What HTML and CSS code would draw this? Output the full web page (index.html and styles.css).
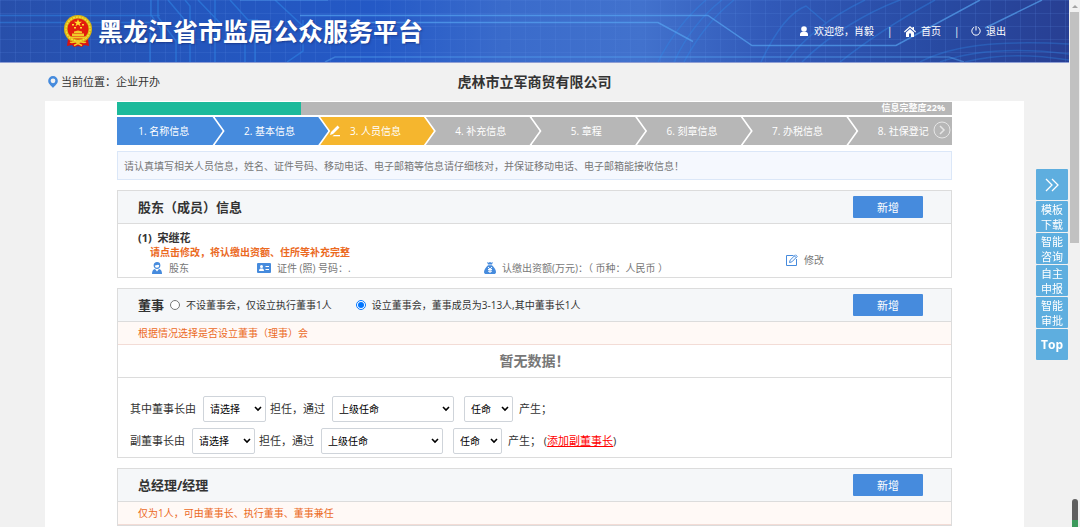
FILE: index.html
```html
<!DOCTYPE html>
<html lang="zh-CN">
<head>
    <meta charset="UTF-8">
    <meta name="viewport" content="width=device-width, initial-scale=1.0">
    <title>黑龙江省市监局公众服务平台</title>
    <link rel="stylesheet" href="styles.css">
</head>
<body>

    <header class="header">
        <svg class="header-lines" viewBox="0 0 1069 62" preserveAspectRatio="xMinYMin slice" fill="none" aria-hidden="true">
            <defs>
                <pattern id="grid" width="15" height="13" patternUnits="userSpaceOnUse">
                    <path d="M0 .5h15M.5 0v13" stroke="#5b8fe8" stroke-opacity=".16"/>
                </pattern>
            </defs>
            <path fill="url(#grid)" d="M0 0h1069v62H0z"/>
            <g stroke="#2f86e6" stroke-opacity=".55" stroke-width="1.5">
                <path d="M151 0v15l10 14v12M158 0v17l18 24v21M185 0l5 6v56M168 0l21 25M230 0l18 20h10M150 33v29M215 0v62M245 40v22M255 40v22M198 0l23 24"/>
                <path d="M275 0l28 26v25l-16 11M303 20v28"/>
                <path d="M0 15.500h160M0 22.500h150" stroke-opacity=".5"/>
                <path d="M658 62C674 30 692 12 706 0M674 62C688 32 704 14 722 0M684 62C698 36 712 18 734 0M761 62C775 32 790 12 806 6l20 17M786 62C810 30 840 12 865 0M802 62C830 34 868 12 900 0M840 62C865 42 895 22 935 0" stroke-opacity=".4"/>
                <path d="M920 62c30-16 75-22 149-18M940 62c34-12 80-14 129-8M965 62c30-8 66-8 104-2" stroke-opacity=".35"/>
            </g>
            <g stroke="#57a7f2" stroke-width="1.5">
                <path d="M325 62l10-5h614l15 5M240 0h88" stroke-opacity=".45"/>
                <path d="M300 15.500h408l44 30h144L980 0M340 22.500h318l35 19M985 28l57-28" stroke-opacity=".65"/>
            </g>
        </svg>
        <div class="brand">
            <svg class="emblem" viewBox="0 0 28 32" aria-hidden="true">
                <path fill="#d8130f" d="M4 24h20l1 7-5-1-2 2-4-1-4 1-2-2-5 1z"/>
                <circle cx="14" cy="14" r="14" fill="#d9b512"/>
                <circle cx="14" cy="14" r="12" fill="none" stroke="#f6dd3a" stroke-width="1.500" stroke-dasharray="2 1"/>
                <circle cx="14" cy="14" r="10.500" fill="#e21c0e"/>
                <path fill="#ffdf2e" d="M14 4l1 2.700h3l-2.400 1.700.9 2.800L14 9.500l-2.500 1.700.9-2.800L10 6.700h3zM8 9h2v1.500H8zM18 9h2v1.500h-2zM10 12h2v1.500h-2zM16 12h2v1.500h-2z"/>
                <path fill="#f1c929" d="M10 16.500l4-1 4 1v1.500h-8zM8 18.500h12V21H8zM5.500 21.500h17l-2 2h-13z"/>
                <path fill="none" stroke="#f1c929" stroke-width="1.500" d="M6 27c3 2 5-1 8-1s5 3 8 1M10 30.500l4-2 4 2"/>
                <circle cx="14" cy="27" r="2" fill="#f1c929"/>
            </svg>
            <h1>黑龙江省市监局公众服务平台</h1>
        </div>
        <nav class="user-nav">
            <span class="nav-item">
                <svg class="nav-icon" viewBox="0 0 10 10" fill="#fff" aria-hidden="true"><circle cx="5" cy="3" r="2.800"/><path d="M1 10c-.5-3 1-4 3-4.200h2C8 6 9.500 7 9 10z"/></svg>
                欢迎您，肖毅
            </span>
            <span class="divider">|</span>
            <a class="nav-item" href="#">
                <svg class="nav-icon home" viewBox="0 0 12 11" fill="#fff" aria-hidden="true"><path d="M6 0l2.500 2.300V1H10v2.700l2 1.900-.7.800L6 1.700.7 6.400 0 5.600z"/><path d="M6 3l4 3.500V11H7V7.500H5V11H2V6.500z"/></svg>
                首页
            </a>
            <span class="divider">|</span>
            <a class="nav-item" href="#">
                <svg class="nav-icon" viewBox="0 0 10 10" fill="none" stroke="#fff" aria-hidden="true"><path d="M3.200 1.200a4.200 4.200 0 1 0 3.600 0M5 0v4.500"/></svg>
                退出
            </a>
        </nav>
    </header>

    <div class="location-bar">
        <div class="location">
            <svg class="pin" viewBox="0 0 10 12" aria-hidden="true"><path fill="#468bdd" fill-rule="evenodd" d="M5 0a4.800 4.800 0 0 0-4.800 4.800C.2 8 3 9.500 5 12c2-2.500 4.800-4 4.800-7.200A4.800 4.800 0 0 0 5 0zm0 2.400a2.400 2.400 0 1 1 0 4.800 2.400 2.400 0 0 1 0-4.800z"/></svg>
            当前位置：企业开办
        </div>
        <h2 class="company">虎林市立军商贸有限公司</h2>
    </div>

    <main class="content">
        <div class="progress">
            <div class="progress-fill" style="width: 22%"></div>
            <span class="progress-text">信息完整度22%</span>
        </div>

        <div class="steps">
            <ol class="step-list">
                <li class="step done">1. 名称信息</li>
                <li class="step done">2. 基本信息</li>
                <li class="step current">
                    <svg class="step-icon" viewBox="0 0 12 12" fill="#fff" aria-hidden="true"><path d="M8.500.5l2 2L4 9l-3 1 1-3zM5 10h6v1.300H3.500z"/></svg>
                    3. 人员信息
                </li>
                <li class="step">4. 补充信息</li>
                <li class="step">5. 章程</li>
                <li class="step">6. 刻章信息</li>
                <li class="step">7. 办税信息</li>
                <li class="step">8. 社保登记</li>
            </ol>
            <button class="step-next" type="button" aria-label="下一步">
                <svg viewBox="0 0 18 18" fill="none" stroke="#e6e6e6" aria-hidden="true"><circle cx="9" cy="9" r="8"/><path stroke-width="1.500" d="M7 5l4 4-4 4"/></svg>
            </button>
        </div>

        <p class="tip">请认真填写相关人员信息，姓名、证件号码、移动电话、电子邮箱等信息请仔细核对，并保证移动电话、电子邮箱能接收信息！</p>

        <section class="card">
            <div class="card-header">
                <h3>股东（成员）信息</h3>
                <button class="btn-add" type="button">新增</button>
            </div>
            <div class="member">
                <div class="member-info">
                    <h4>(1)&nbsp; 宋继花</h4>
                    <p class="member-warning">请点击修改，将认缴出资额、住所等补充完整</p>
                    <div class="member-details">
                        <span class="detail">
                            <svg viewBox="0 0 12 12" aria-hidden="true"><circle cx="6" cy="3.500" r="2.800" fill="none" stroke="#468bdd" stroke-width="1.200"/><path fill="#468bdd" d="M3 2.500C4 0 8 0 9 2.500v1L7 2.700 3 3.800zM1 12c0-3 1-4.500 3-5l2 2.500L8 7c2 .5 3 2 3 5z"/></svg>
                            股东
                        </span>
                        <span class="detail">
                            <svg class="id-card" viewBox="0 0 14 10" aria-hidden="true"><rect width="14" height="10" rx="1" fill="#468bdd"/><circle cx="4.500" cy="3.500" r="1.500" fill="#fff"/><path fill="#fff" d="M2 8c0-2 1-2.500 2.500-2.500S7 6 7 8zM8.500 3H12v1H8.500zM8.500 6H12v1H8.500z"/></svg>
                            证件 (照) 号码：.
                        </span>
                        <span class="detail">
                            <svg viewBox="0 0 12 12" aria-hidden="true"><path fill="#468bdd" d="M3 0l1.500.7L6 0l1.500.7L9 0 8 2.500H4zM4 3.200h4C10 5 12 7.500 12 10c0 1.500-1 2-2 2H2c-1 0-2-.5-2-2 0-2.500 2-5 4-6.800z"/><path stroke="#fff" fill="none" d="M4 5l2 2.200L8 5M4 7.500h4M4 9.200h4M6 7v4"/></svg>
                            认缴出资额(万元)：（ 币种：人民币 ）
                        </span>
                    </div>
                </div>
                <a class="edit-link" href="#">
                    <svg viewBox="0 0 12 12" fill="none" stroke="#468bdd" aria-hidden="true"><path d="M7.500 1.500h-7v10h10V5M3.500 8.500l.6-2.300L9.500.8l1.700 1.700-5.400 5.400zM8.500 2l1.500 1.500"/></svg>
                    修改
                </a>
            </div>
        </section>

        <section class="card">
            <div class="card-header">
                <h3>董事</h3>
                <div class="radio-group">
                    <input type="radio" name="board" id="board-none">
                    <label for="board-none">不设董事会，仅设立执行董事1人</label>
                    <input type="radio" name="board" id="board-set" checked>
                    <label for="board-set">设立董事会，董事成员为3-13人,其中董事长1人</label>
                </div>
                <button class="btn-add" type="button">新增</button>
            </div>
            <p class="notice">根据情况选择是否设立董事（理事）会</p>
            <p class="empty">暂无数据！</p>
            <form class="appoint">
                <div class="appoint-row">
                    <label for="chairman">其中董事长由</label>
                    <select class="select-person" id="chairman"><option>请选择</option></select>
                    <label for="chairman-by">担任，通过</label>
                    <select class="select-way" id="chairman-by"><option>上级任命</option></select>
                    <select class="select-type" aria-label="产生方式"><option>任命</option></select>
                    <span>产生；</span>
                </div>
                <div class="appoint-row">
                    <label for="vice">副董事长由</label>
                    <select class="select-person" id="vice"><option>请选择</option></select>
                    <label for="vice-by">担任，通过</label>
                    <select class="select-way" id="vice-by"><option>上级任命</option></select>
                    <select class="select-type" aria-label="产生方式"><option>任命</option></select>
                    <span>产生； (<a class="add-link" href="#">添加副董事长</a>)</span>
                </div>
            </form>
        </section>

        <section class="card">
            <div class="card-header">
                <h3>总经理/经理</h3>
                <button class="btn-add" type="button">新增</button>
            </div>
            <p class="notice">仅为1人，可由董事长、执行董事、董事兼任</p>
        </section>
    </main>

    <aside class="side-menu">
        <button type="button" aria-label="收起">
            <svg viewBox="0 0 14 14" fill="none" stroke="#fff" stroke-width="1.300" aria-hidden="true"><path d="M1 1l6 6-6 6M7 1l6 6-6 6"/></svg>
        </button>
        <a href="#">模板<br>下载</a>
        <a href="#">智能<br>咨询</a>
        <a href="#">自主<br>申报</a>
        <a href="#">智能<br>审批</a>
        <a class="to-top" href="#">Top</a>
    </aside>

    <div class="scrollbar" aria-hidden="true">
        <div class="scroll-arrow"></div>
        <div class="scroll-thumb"></div>
        <div class="scroll-mark"></div>
    </div>

</body>
</html>
```
FILE: styles.css
```css
:root {
    --primary: #468bdd;
    --current: #f5b62e;
    --done: #1cba9b;
    --gray: #b7b7b7;
    --side: #5eaedf;
    --border: #dcdcdc;
    --background: #f1f1f1;
    --header-bg: #f5f7f9;
    --text: #333333;
    --text-light: #777777;
    --warning: #eb6a1f;
}

* {
    box-sizing: border-box;
    margin: 0;
    padding: 0;
}

body {
    display: flex;
    flex-direction: column;
    min-height: 100vh;
    padding-right: 11px;
    font-family: "Open Sans", "Noto Sans CJK SC", sans-serif;
    font-size: 10px;
    line-height: 14px;
    color: var(--text);
    background: var(--background);
}

a {
    color: inherit;
    text-decoration: none;
}

button {
    border: none;
    font-family: inherit;
    cursor: pointer;
}

svg {
    display: block;
    flex: none;
}

/* Header */
.header {
    position: relative;
    display: flex;
    align-items: center;
    justify-content: space-between;
    height: 63px;
    padding: 0 63px 0 64px;
    color: #fff;
    border-bottom: 1px solid #8f9fd4;
    background: linear-gradient(90deg, #284faa 0%, #2456bd 18%, #2459c6 35%, #3a6bcb 47%, #4272cd 60%, #3159b8 72%, #284aa2 88%, #283f93 100%);
}

.header-lines {
    position: absolute;
    top: 0;
    left: 0;
    width: 100%;
    height: 100%;
}

.brand,
.user-nav {
    position: relative;
    display: flex;
    align-items: center;
}

.brand {
    gap: 6px;
}

.emblem {
    width: 28px;
    height: 32px;
}

.brand h1 {
    font-size: 25px;
    line-height: 32px;
    font-weight: 700;
    text-shadow: 1px 1px 2px rgba(20, 40, 110, 0.6);
}

.user-nav {
    gap: 13px;
}

.nav-item {
    display: flex;
    align-items: center;
    gap: 5px;
}

.nav-icon {
    width: 10px;
    height: 10px;
}

.nav-icon.home {
    width: 12px;
    height: 11px;
}

.divider {
    width: 4px;
}

/* Location */
.location-bar {
    display: grid;
    grid-template-columns: 1fr auto 1fr;
    align-items: center;
    height: 38px;
    padding: 0 48px;
}

.location {
    display: flex;
    align-items: center;
    gap: 3px;
    font-size: 11px;
}

.pin {
    width: 10px;
    height: 12px;
}

.company {
    font-size: 14px;
    line-height: 20px;
}

/* Content */
.content {
    flex: 1;
    margin: 0 45px;
    padding: 1px 72px 0;
    background: #fff;
}

.progress {
    position: relative;
    height: 13px;
    background: var(--gray);
}

.progress-fill {
    height: 100%;
    background: var(--done);
}

.progress-text {
    position: absolute;
    top: 0;
    right: 7px;
    line-height: 12px;
    font-size: 9px;
    font-weight: 700;
    color: #fff;
}

.steps {
    position: relative;
    margin-top: 2px;
    overflow: hidden;
}

.step-list {
    display: flex;
    margin-right: -10px;
    list-style: none;
}

.step {
    display: flex;
    flex: 1 1 24px;
    align-items: center;
    justify-content: center;
    min-width: 0;
    height: 28px;
    margin-left: -8px;
    padding-right: 4px;
    white-space: nowrap;
    color: #fff;
    background: var(--gray);
    clip-path: polygon(0 0, calc(100% - 10px) 0, 100% 50%, calc(100% - 10px) 100%, 0 100%, 10px 50%);
}

.step.done {
    background: var(--primary);
}

.step:first-child {
    clip-path: polygon(0 0, calc(100% - 10px) 0, 100% 50%, calc(100% - 10px) 100%, 0 100%);
}

.step.current {
    gap: 9px;
    padding-right: 24px;
    background: var(--current);
}

.step-icon {
    width: 12px;
    height: 12px;
}

.step-next {
    position: absolute;
    top: 4px;
    right: 1px;
    width: 18px;
    height: 18px;
    background: none;
}

.tip {
    margin-top: 6px;
    padding: 7px 6px 6px;
    border: 1px solid #dbe7f8;
    color: var(--text-light);
    background: #f5f8fe;
}

/* Cards */
.card {
    margin-top: 10px;
    border: 1px solid var(--border);
}

.card-header {
    display: flex;
    align-items: center;
    height: 33px;
    padding: 0 28px 0 20px;
    border-bottom: 1px solid var(--border);
    background: var(--header-bg);
}

.card-header h3 {
    font-size: 13px;
    line-height: 20px;
}

.btn-add {
    width: 70px;
    height: 22px;
    margin-left: auto;
    border-radius: 1px;
    font-size: 11px;
    color: #fff;
    background: var(--primary);
}

.member {
    display: flex;
    justify-content: space-between;
    padding: 7px 127px 2px 20px;
}

.member h4 {
    font-size: 11px;
}

.member-warning {
    padding-left: 12px;
    font-weight: 700;
    color: var(--warning);
}

.member-details {
    display: grid;
    grid-template-columns: 106px 227px auto;
    padding-left: 13px;
    margin-top: 2px;
    color: var(--text-light);
}

.detail,
.edit-link {
    display: flex;
    align-items: center;
    gap: 6px;
}

.detail svg,
.edit-link svg {
    width: 12px;
    height: 12px;
}

.detail .id-card {
    width: 14px;
    height: 10px;
}

.edit-link {
    padding-top: 14px;
    color: var(--text-light);
}

.radio-group {
    display: flex;
    align-items: center;
    margin-left: 6px;
}

.radio-group input {
    width: 10px;
    height: 10px;
    margin-right: 6px;
}

.radio-group label {
    margin-right: 24px;
}

.notice {
    padding: 4px 20px;
    border-bottom: 1px solid #f3dcd6;
    color: var(--warning);
    background: #fff9f6;
}

.empty {
    padding: 6px 0;
    border-bottom: 1px solid var(--border);
    font-size: 14px;
    line-height: 20px;
    font-weight: 700;
    text-align: center;
    color: var(--text-light);
}

.appoint {
    display: grid;
    gap: 6px;
    padding: 18px 12px 3px;
    font-size: 11px;
}

.appoint-row {
    display: flex;
    align-items: center;
}

.appoint select {
    height: 26px;
    border: 1px solid #cfd4da;
    border-radius: 2px;
    padding: 0 6px;
    appearance: none;
    font-family: inherit;
    font-size: 10px;
    color: #000;
    background: #fff url("data:image/svg+xml,%3Csvg xmlns='http://www.w3.org/2000/svg' width='8' height='6' fill='none' stroke='%23000' stroke-width='1.600'%3E%3Cpath d='M1 1l3 3 3-3'/%3E%3C/svg%3E") no-repeat right 3px center;
}

.appoint .select-person {
    width: 63px;
    margin: 0 4px 0 7px;
}

.appoint .select-way {
    width: 122px;
    margin: 0 10px 0 7px;
}

.appoint .select-type {
    width: 49px;
    margin-right: 6px;
}

.add-link {
    color: #ff0000;
    text-decoration: underline;
}

/* Floating menu */
.side-menu {
    position: fixed;
    top: 169px;
    right: 12px;
    display: grid;
    gap: 1px;
    width: 32px;
}

.side-menu a,
.side-menu button {
    display: flex;
    align-items: center;
    justify-content: center;
    height: 31px;
    border-radius: 1px;
    font-size: 11px;
    line-height: 15px;
    color: #fff;
    background: var(--side);
}

.side-menu svg {
    width: 14px;
    height: 14px;
}

.side-menu .to-top {
    font-size: 12px;
    font-weight: 700;
}

/* Scrollbar */
.scrollbar {
    position: fixed;
    top: 0;
    right: 0;
    bottom: 0;
    display: flex;
    flex-direction: column;
    align-items: center;
    width: 11px;
    background: #f1f1f1;
}

.scroll-arrow {
    margin: 5px 0 4px;
    border: 3px solid transparent;
    border-top: none;
    border-bottom-color: #a3a3a3;
}

.scroll-thumb {
    width: 9px;
    height: 231px;
    background: #c1c1c1;
}

.scroll-mark {
    width: 6px;
    height: 28px;
    margin-top: auto;
    border-radius: 3px 3px 0 0;
    background: linear-gradient(#606060 75%, #3c9a5c 75%);
}
```
